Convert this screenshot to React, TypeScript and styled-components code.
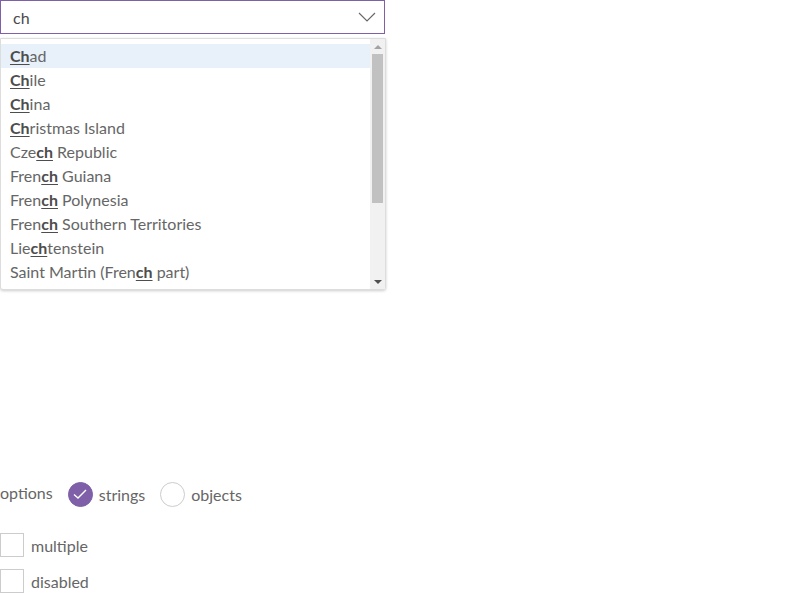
import React from "react";
import styled, { createGlobalStyle } from "styled-components";

const Global = createGlobalStyle`
  html, body { margin: 0; padding: 0; background: #fff; }
  body { font-family: "Lato", "Open Sans", sans-serif; color: #595959; }
`;

const Page = styled.div`
  width: 800px;
  height: 600px;
  position: relative;
  display: flex;
  flex-direction: column;
`;

const ComboWrap = styled.div`
  position: relative;
  width: 385px;
`;

const Input = styled.div`
  box-sizing: border-box;
  height: 34px;
  border: 1px solid #7e5fa8;
  display: flex;
  align-items: center;
  justify-content: space-between;
  padding: 0 8px 0 12px;
  font-size: 16px;
  color: #4a4a4a;
`;

const Popup = styled.div`
  position: absolute;
  top: 38px;
  left: 0;
  width: 386px;
  height: 252px;
  box-sizing: border-box;
  border: 1px solid #ddd;
  border-radius: 0 0 3px 3px;
  box-shadow: 0 1px 3px rgba(0, 0, 0, 0.2);
  background: #fff;
  display: flex;
`;

const List = styled.div`
  flex: 1;
  padding-top: 5px;
  overflow: hidden;
`;

const Item = styled.div<{ $active?: boolean }>`
  height: 24px;
  line-height: 24px;
  padding-left: 9px;
  font-size: 16px;
  color: #666;
  background: ${(p) => (p.$active ? "#e8f0f9" : "transparent")};
  white-space: nowrap;
`;

const Match = styled.span`
  font-weight: 700;
  color: #4d4d4d;
  text-decoration: underline;
  text-underline-offset: 2px;
`;

const Scrollbar = styled.div`
  width: 15px;
  background: #f1f1f1;
  display: flex;
  flex-direction: column;
  align-items: center;
`;

const Arrow = styled.div<{ $down?: boolean }>`
  height: 15px;
  width: 15px;
  display: flex;
  align-items: center;
  justify-content: center;
  &::after {
    content: "";
    border-left: 4px solid transparent;
    border-right: 4px solid transparent;
    ${(p) =>
      p.$down
        ? "border-top: 4px solid #505050;"
        : "border-bottom: 4px solid #a3a3a3;"}
  }
`;

const Thumb = styled.div`
  width: 11px;
  height: 149px;
  background: #c1c1c1;
`;

const Controls = styled.div`
  margin-top: 448px;
  display: flex;
  flex-direction: column;
  font-size: 16px;
  color: #666;
`;

const Row = styled.div<{ $gap?: number }>`
  display: flex;
  align-items: center;
  height: 24px;
  margin-top: ${(p) => p.$gap ?? 0}px;
`;

const Label = styled.span`
  margin-right: 15px;
  position: relative;
  top: -2px;
`;

const Radio = styled.span<{ $checked?: boolean }>`
  box-sizing: border-box;
  width: 25px;
  height: 25px;
  border-radius: 50%;
  border: 1px solid ${(p) => (p.$checked ? "#7e5fa8" : "#ccc")};
  background: ${(p) => (p.$checked ? "#7e5fa8" : "#fff")};
  display: inline-flex;
  align-items: center;
  justify-content: center;
  margin-right: 6px;
`;

const OptText = styled.span`
  margin-right: 15px;
`;

const Checkbox = styled.span`
  box-sizing: border-box;
  width: 24px;
  height: 24px;
  border: 1px solid #ccc;
  margin-right: 7px;
`;

const countries = [
  ["", "Ch", "ad"],
  ["", "Ch", "ile"],
  ["", "Ch", "ina"],
  ["", "Ch", "ristmas Island"],
  ["Cze", "ch", " Republic"],
  ["Fren", "ch", " Guiana"],
  ["Fren", "ch", " Polynesia"],
  ["Fren", "ch", " Southern Territories"],
  ["Lie", "ch", "tenstein"],
  ["Saint Martin (Fren", "ch", " part)"],
];

export default function App() {
  return (
    <Page>
      <Global />
      <ComboWrap>
        <Input>
          <span>ch</span>
          <svg width="18" height="10" viewBox="0 0 18 10">
            <path d="M1 1 L9 9 L17 1" fill="none" stroke="#666" strokeWidth="1.1" />
          </svg>
        </Input>
        <Popup>
          <List>
            {countries.map(([a, b, c], i) => (
              <Item key={i} $active={i === 0}>
                {a}
                <Match>{b}</Match>
                {c}
              </Item>
            ))}
          </List>
          <Scrollbar>
            <Arrow />
            <Thumb />
            <div style={{ flex: 1 }} />
            <Arrow $down />
          </Scrollbar>
        </Popup>
      </ComboWrap>
      <Controls>
        <Row>
          <Label>options</Label>
          <Radio $checked>
            <svg width="16" height="14" viewBox="0 0 16 14">
              <path d="M2 7.5 L6 11 L14 3" fill="none" stroke="#fff" strokeWidth="1.4" />
            </svg>
          </Radio>
          <OptText>strings</OptText>
          <Radio />
          <OptText>objects</OptText>
        </Row>
        <Row $gap={27}>
          <Checkbox />
          <span>multiple</span>
        </Row>
        <Row $gap={12}>
          <Checkbox />
          <span>disabled</span>
        </Row>
      </Controls>
    </Page>
  );
}
